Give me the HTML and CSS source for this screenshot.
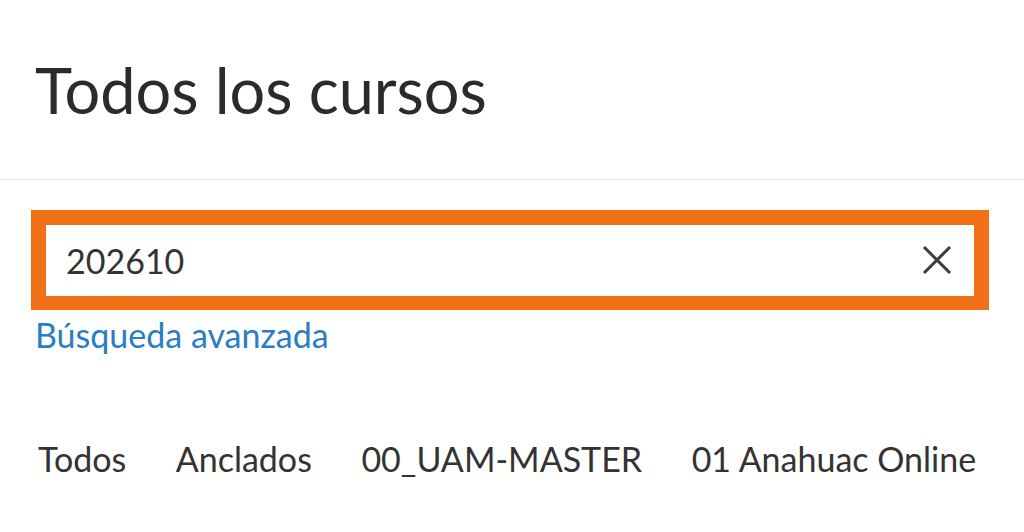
FILE: index.html
```html
<!DOCTYPE html>
<html lang="es">
<head>
    <meta charset="UTF-8">
    <meta name="viewport" content="width=device-width, initial-scale=1.0">
    <title>Todos los cursos</title>
    <link rel="stylesheet" href="styles.css">
</head>
<body>
    <div class="page-header">
        <h1>Todos los cursos</h1>
    </div>

    <div class="search">
        <div class="search-box">
            <input type="text" class="search-input" value="202610">
            <button class="clear-btn" aria-label="Borrar">
                <svg width="30" height="30" viewBox="0 0 30 30">
                    <path d="M2 2 L28 28 M28 2 L2 28" stroke="#3d3d3d" stroke-width="3" fill="none"/>
                </svg>
            </button>
        </div>
        <a href="#" class="advanced-link">Búsqueda avanzada</a>
    </div>

    <ul class="tabs">
        <li>Todos</li>
        <li>Anclados</li>
        <li>00_UAM-MASTER</li>
        <li>01 Anahuac Online</li>
    </ul>
</body>
</html>
```

FILE: styles.css
```css
body { margin: 0; font-family: Lato, "Noto Sans", sans-serif; background: #fff; color: #2b2b2b; }
.page-header { padding: 52px 35px 51px; border-bottom: 1px solid #e3e6ee; }
.page-header h1 { margin: 0; font-size: 63px; font-weight: 400; line-height: 1.2; color: #2b2b2b; }
.search { padding: 30px 35px 0 31px; }
.search-box { display: flex; align-items: center; border: 15px solid #f07118; border-bottom-width: 14px; background: #fff; padding: 0 22px 0 20px; width: 886px; }
.search-input { flex: 1; border: none; outline: none; padding: 15px 0; margin: 0; font-family: Lato, sans-serif; font-size: 34px; line-height: 41px; height: 41px; color: #333; background: transparent; }
.clear-btn { border: none; background: none; padding: 0; margin: 0; width: 30px; height: 30px; cursor: pointer; display: block; }
.clear-btn svg { display: block; }
.advanced-link { display: inline-block; margin: 4px 0 0 4px; font-size: 34px; line-height: 41px; color: #2a7dc5; text-decoration: none; }
.tabs { list-style: none; margin: 83px 0 0; padding: 0 0 0 38px; display: flex; gap: 49.5px; }
.tabs li { font-size: 34px; line-height: 41px; color: #333; }
```
